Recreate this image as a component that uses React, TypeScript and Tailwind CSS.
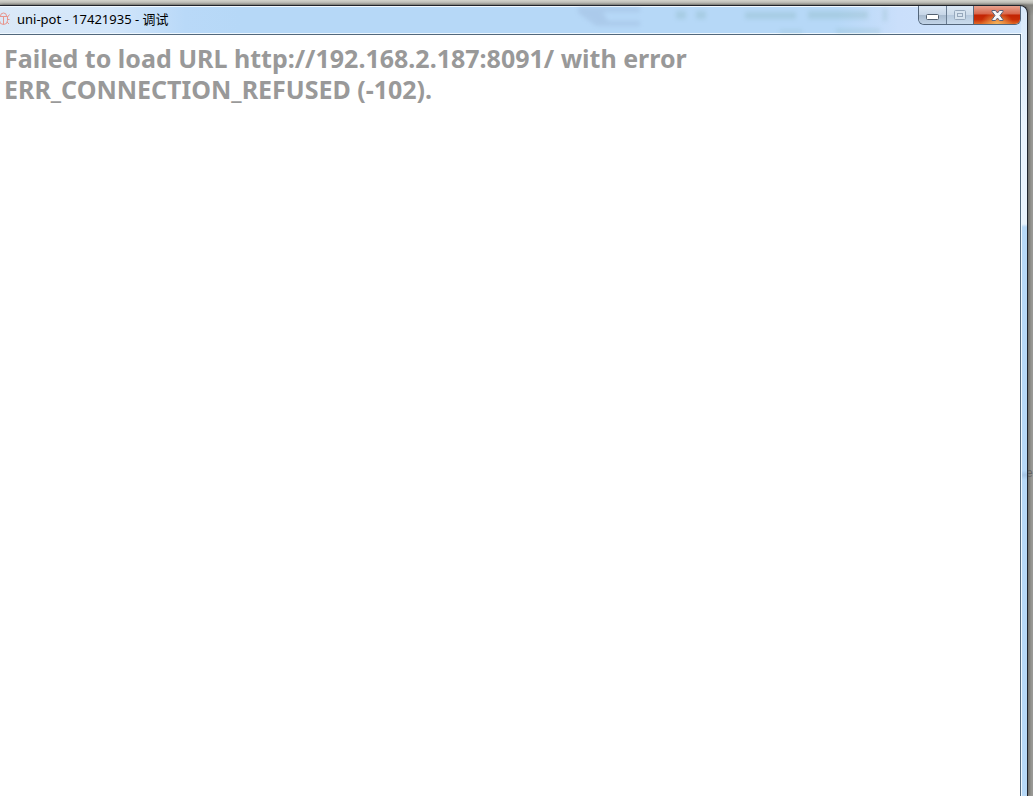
import type { ReactNode } from 'react';

interface CaptionButtonProps {
  label: string;
  className: string;
  disabled?: boolean;
  children: ReactNode;
}

function CaptionButton({ label, className, disabled, children }: CaptionButtonProps) {
  return (
    <button
      type="button"
      aria-label={label}
      disabled={disabled}
      className={`flex h-[18px] items-center justify-center ${className}`}
    >
      {children}
    </button>
  );
}

function BugIcon() {
  return (
    <svg width="10" height="14" viewBox="0 0 10 14" fill="none" stroke="#e8958c" aria-hidden="true">
      <path d="M-.5 4.5h8v4a4 4 0 0 1-8 0zM3.5 4.5v8M.5 4a3 3 0 0 1 6 0M7.5 5L9.5 2.5M7.5 7.5h2M7 10l2 2" />
    </svg>
  );
}

function TitleBar() {
  return (
    <header className="flex h-7 shrink-0 items-start justify-between border-t border-b border-[#f2f9ff] bg-[linear-gradient(90deg,#dbe9f7_0px,#d3e6fa_110px,#b9d9f8_185px,#b6d8f7_240px,#b6d8f7_82%,#cadffb_88%,#d0e5fb_100%)]">
      <div className="flex h-6 items-center">
        <BugIcon />
        <h1 className="ml-[7px] font-['Noto_Sans','Noto_Sans_CJK_SC',sans-serif] text-[13px] leading-4 text-black">
          uni-pot - 17421935 - 调试
        </h1>
      </div>

      {/* Code editor showing through the glass */}
      <div aria-hidden="true" className="ml-auto h-[26px] w-[340px] overflow-hidden opacity-20 blur-[2px]">
        <svg width="340" height="26" viewBox="0 0 340 26">
          <path d="M-8 0h70v5H25l5 9h32v5H18z" fill="#8296bc" />
          <path d="M98 4h10v8H98zM118 4h10v8h-10zM167 5h51v7h-51zM230 4h60v8h-60zM305 2h4v12h-4zM202 23h22v3h-22zM258 22h44v4h-44z" fill="#6c9f98" />
        </svg>
      </div>

      {/* Window controls */}
      <div className="-mt-px flex overflow-hidden rounded-b-md border border-t-0 border-[#53667b]">
        <CaptionButton
          label="Minimize"
          className="w-7 border-r border-[#697c92] bg-[linear-gradient(#dce8f5_0%,#c7d6e7_48%,#a9bbcf_52%,#c2d4e7_100%)]"
        >
          <svg width="13" height="6" viewBox="0 0 13 6" className="mt-1">
            <rect x="0.5" y="0.5" width="12" height="5" rx="1" fill="#fff" stroke="#536070" />
          </svg>
        </CaptionButton>
        <CaptionButton
          label="Maximize"
          disabled
          className="w-[27px] border-r border-[#596a7d] bg-[linear-gradient(#dce8f5_0%,#cddbea_48%,#b7c9dd_52%,#cadced_100%)]"
        >
          <svg width="12" height="10" viewBox="0 0 12 10" fill="none" stroke="#97a8bc">
            <rect x="0.5" y="0.5" width="11" height="9" rx="1" fill="#d8e4f0" />
            <rect x="3.5" y="3.5" width="5" height="3" />
          </svg>
        </CaptionButton>
        <CaptionButton
          label="Close"
          className="w-[46px] bg-[radial-gradient(ellipse_at_bottom,#f4b45b_0%,transparent_50%),linear-gradient(#e8a28f_0%,#d8664c_44%,#c22303_50%,#c82c06_75%,#e06a25_100%)]"
        >
          <svg width="13" height="11" viewBox="0 0 13 11">
            <path d="M1 .5h3.5l2 2.5 2-2.5H12v1L9 5.5l3 4v1H8.5l-2-2.5-2 2.5H1v-1l3-4-3-4z" fill="#f8f8f8" stroke="#59607a" />
          </svg>
        </CaptionButton>
      </div>
    </header>
  );
}

export default function App() {
  return (
    <div className="relative flex h-screen flex-col overflow-hidden bg-[linear-gradient(#d4d4cd_0px,#b9b9b3_3px,#84847f_5px,#9c9c98_16px,#9c9c98_100%)] pt-[5px] pr-[5px]">
      {/* Editor text behind the window */}
      <span
        aria-hidden="true"
        className="absolute right-0 top-[466px] font-['Liberation_Mono',monospace] text-xs leading-4 text-[#666666]"
      >
        e
      </span>

      <div className="relative flex min-h-0 flex-1 flex-col rounded-tr-lg border-t border-r border-[#20242c] bg-[linear-gradient(#d8e9fb_0px,#e9f3fc_120px,#e9f3fc_218px,#b7d9f8_221px,#b7d9f8_464px,#a5c5e5_469px,#b7d9f8_474px)] pr-[6px] shadow-[2px_0_3px_#55555099]">
        <TitleBar />
        <main className="min-h-0 flex-1 border-t border-r border-[#52687c] bg-white px-1 py-2 outline outline-[#eff8ff]">
          <h2 className="max-w-[720px] font-['Noto_Sans',sans-serif] text-[25px] font-bold leading-[31px] text-[#999999]">
            Failed to load URL http://192.168.2.187:8091/ with error ERR_CONNECTION_REFUSED (-102).
          </h2>
        </main>
      </div>
    </div>
  );
}
